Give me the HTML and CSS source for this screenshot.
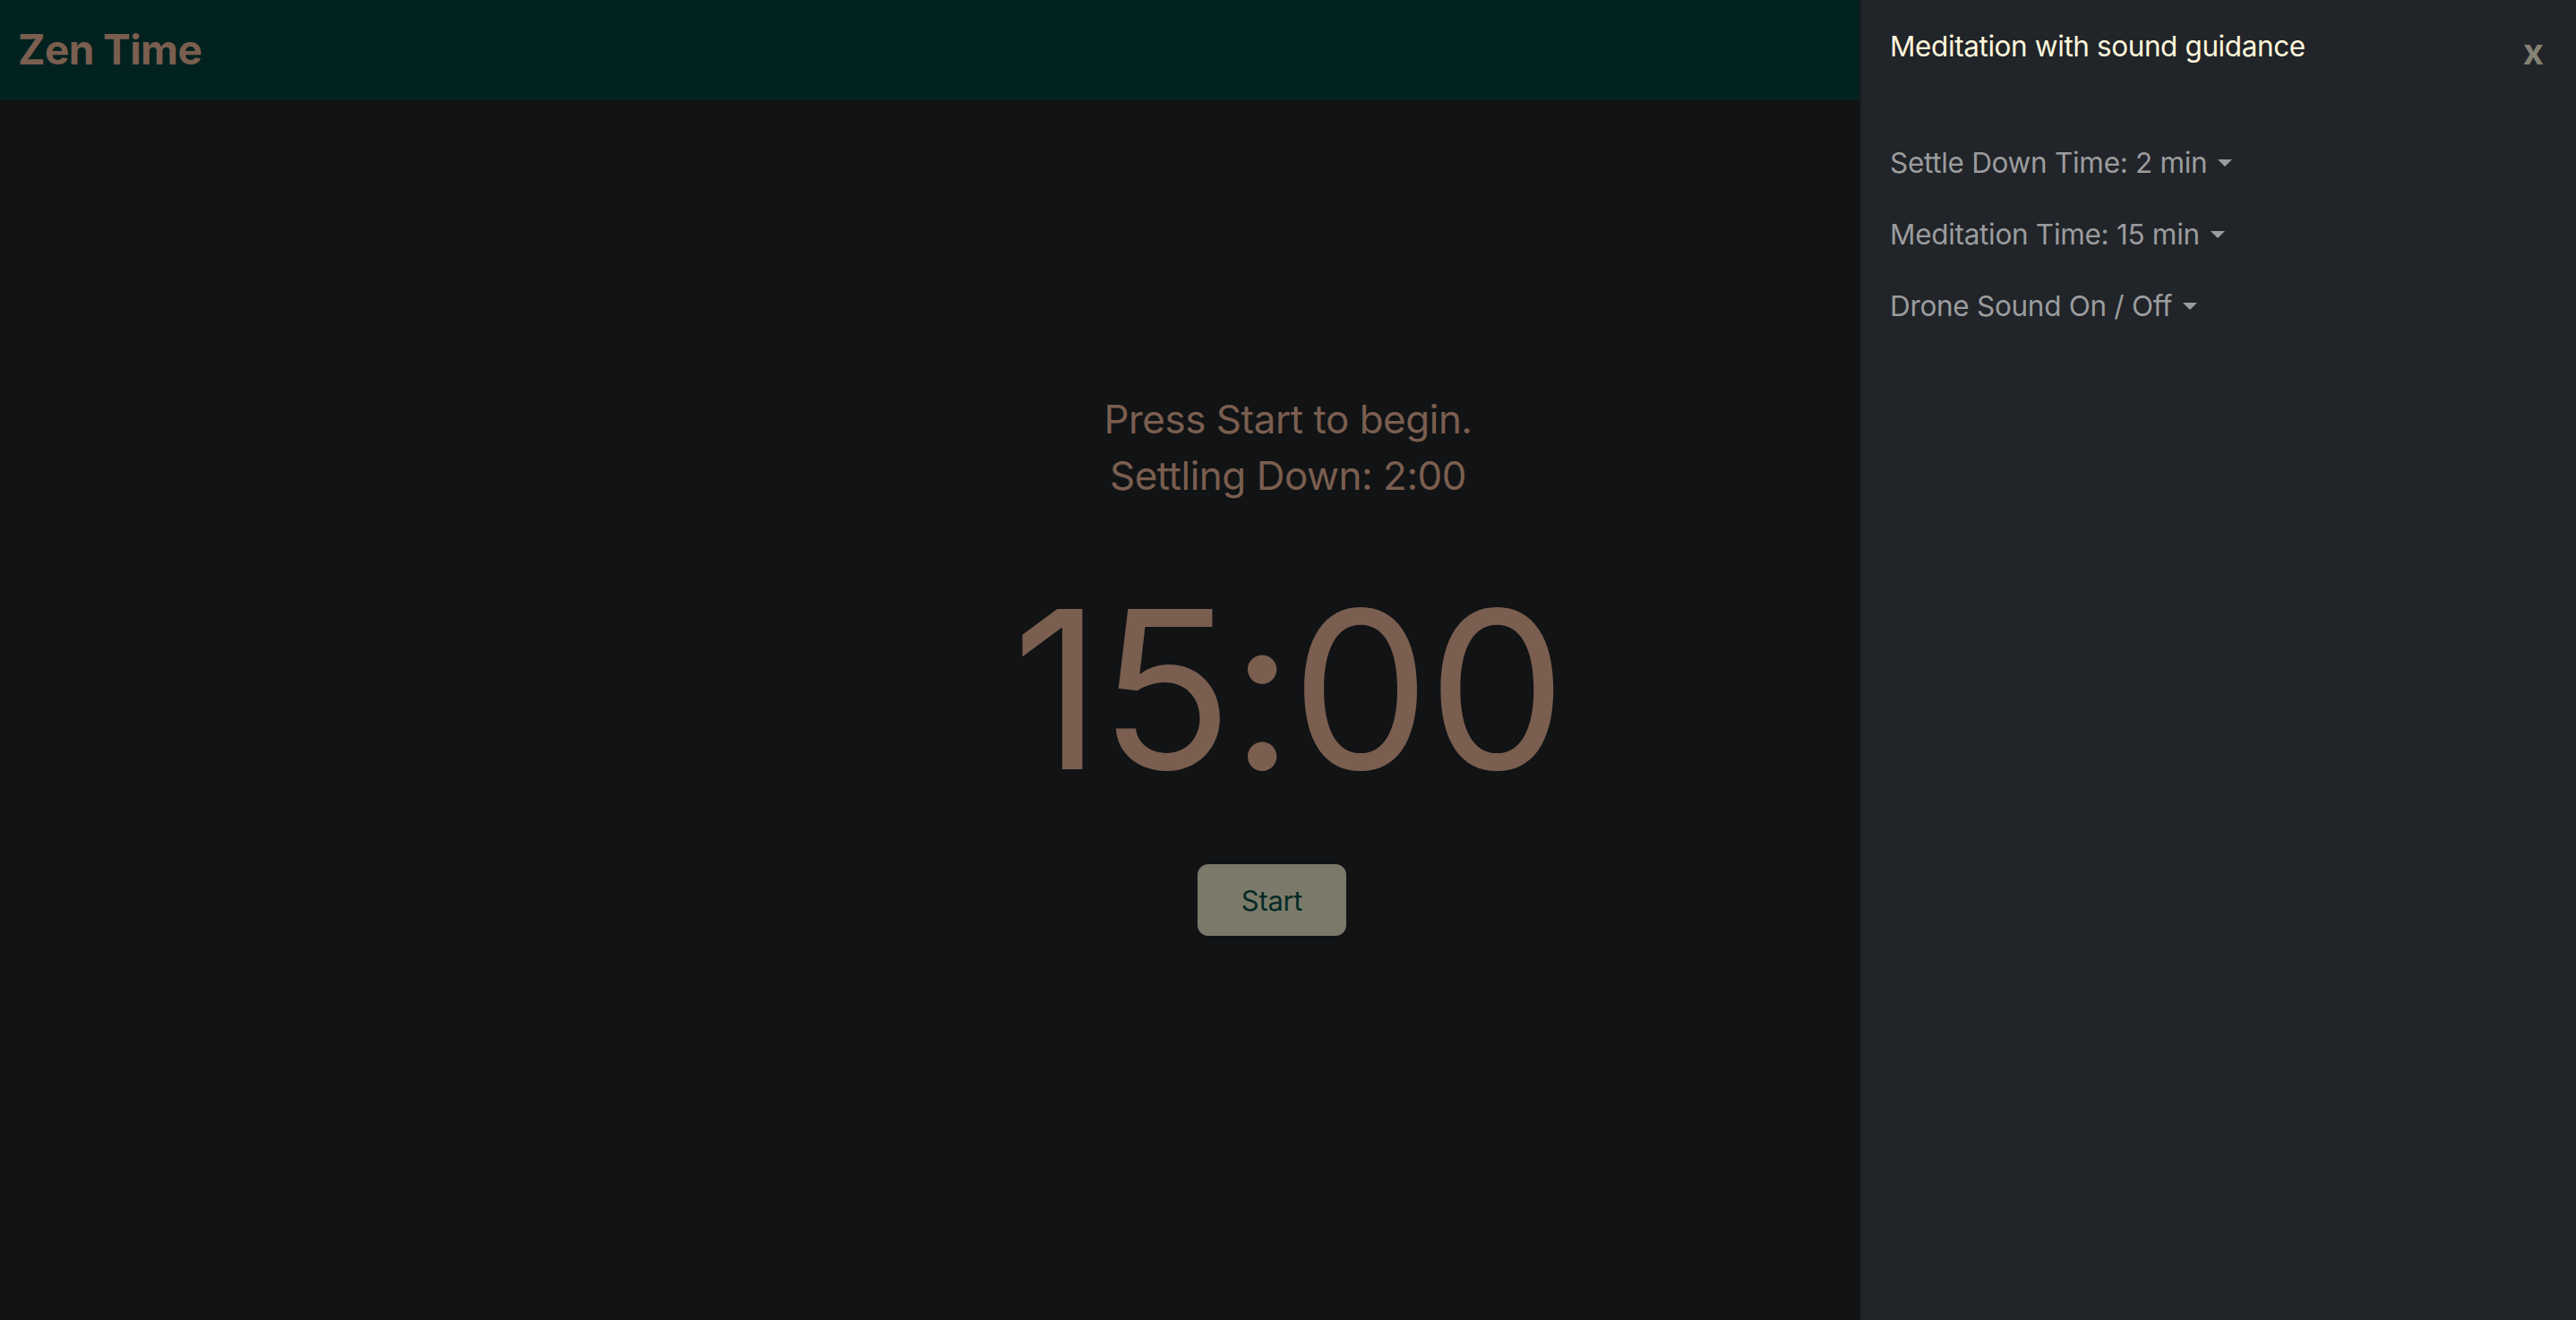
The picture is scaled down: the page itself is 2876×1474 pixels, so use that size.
FILE: index.html
```html
<!DOCTYPE html>
<html lang="en">
<head>
<meta charset="utf-8">
<title>Zen Time</title>
<link rel="stylesheet" href="styles.css">
</head>
<body>
<header class="topbar">
  <span class="brand">Zen Time</span>
</header>
<main class="main">
  <p class="status">Press Start to begin.</p>
  <p class="status">Settling Down: 2:00</p>
  <div class="clock">15:00</div>
  <button class="start-btn" type="button">Start</button>
</main>
<aside class="offcanvas">
  <div class="offcanvas-header">
    <h5 class="offcanvas-title">Meditation with sound guidance</h5>
    <button class="close-btn" type="button">x</button>
  </div>
  <nav class="offcanvas-body">
    <a class="menu-link">Settle Down Time: 2 min<span class="caret"></span></a>
    <a class="menu-link">Meditation Time: 15 min<span class="caret"></span></a>
    <a class="menu-link">Drone Sound On / Off<span class="caret"></span></a>
  </nav>
</aside>
</body>
</html>
```
FILE: styles.css
```css
* { box-sizing: border-box; }
html, body {
  margin: 0;
  height: 100%;
}
body {
  background: #111315;
  font-family: Inter, "Noto Sans", sans-serif;
  overflow: hidden;
}
.topbar {
  height: 112px;
  background: #022220;
  display: flex;
  align-items: center;
  padding-left: 20px;
  padding-bottom: 2px;
}
.brand {
  font-family: Inter, sans-serif;
  font-weight: 700;
  font-size: 46px;
  letter-spacing: -0.6px;
  color: #7a5e4f;
}
.main {
  display: flex;
  flex-direction: column;
  align-items: center;
  padding-top: 325px;
}
.status {
  margin: 0;
  font-size: 44px;
  line-height: 63px;
  letter-spacing: -0.5px;
  color: #7a5e4f;
}
.clock {
  margin-top: 84px;
  font-size: 246px;
  line-height: 1;
  font-weight: 400;
  letter-spacing: -3px;
  color: #7a5e4f;
}
.start-btn {
  margin-top: 72px;
  margin-right: 36px;
  width: 166px;
  height: 80px;
  border: 0;
  border-radius: 12px;
  background: #7b7a6a;
  color: #032a26;
  font-family: Inter, sans-serif;
  font-size: 31px;
  letter-spacing: -0.3px;
}
.offcanvas {
  position: fixed;
  top: 0;
  right: 0;
  width: 800px;
  height: 100%;
  background: #212429;
  border-left: 2px solid #1a1c20;
}
.offcanvas-header {
  display: flex;
  justify-content: space-between;
  align-items: flex-start;
  height: 74px;
  padding: 30px 32px 0 32px;
}
.offcanvas-title {
  margin: 0;
  font-size: 31.5px;
  font-weight: 400;
  line-height: 44px;
  letter-spacing: -0.4px;
  color: #fef7dc;
}
.close-btn {
  background: none;
  border: 0;
  padding: 0;
  margin-top: 6px;
  margin-right: 4px;
  font-family: Inter, sans-serif;
  font-weight: 700;
  font-size: 40px;
  line-height: 44px;
  color: #848274;
}
.offcanvas-body {
  display: flex;
  flex-direction: column;
  padding: 86px 32px 0 32px;
  gap: 36px;
}
.menu-link {
  display: flex;
  align-items: center;
  font-size: 31.5px;
  line-height: 44px;
  letter-spacing: -0.3px;
  color: #9b9c9e;
}
.caret {
  display: inline-block;
  margin-left: 12px;
  width: 0;
  height: 0;
  border-left: 8px solid transparent;
  border-right: 8px solid transparent;
  border-top: 8px solid #9b9c9e;
}
```
